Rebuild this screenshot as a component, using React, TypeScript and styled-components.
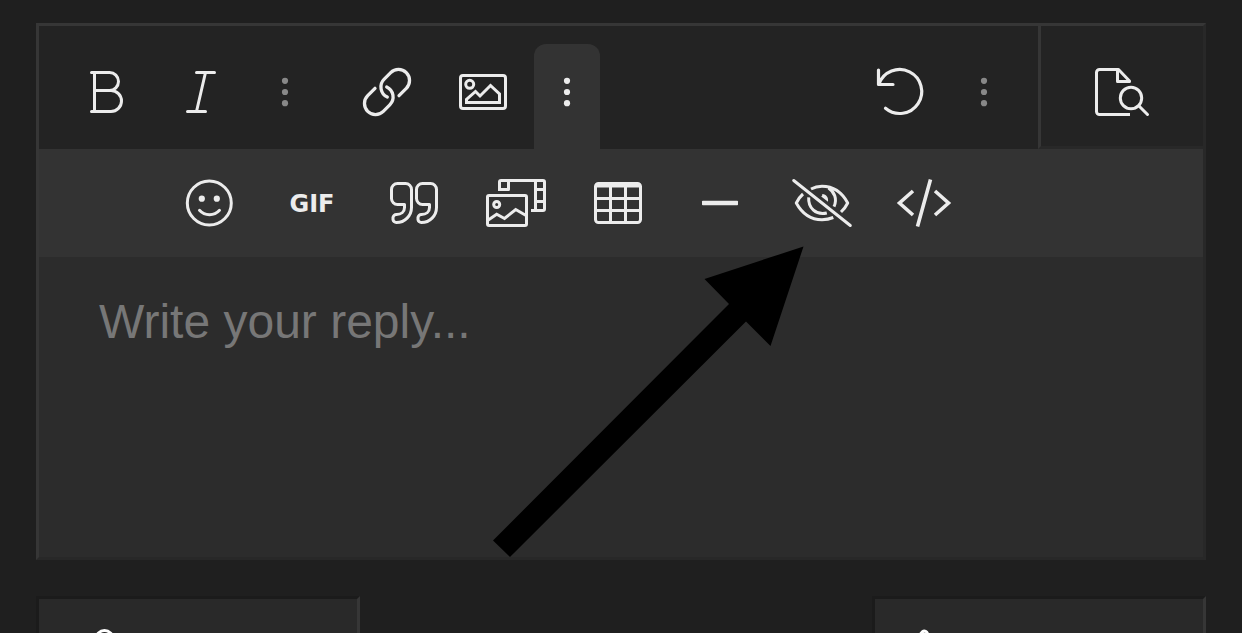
import React from "react";
import styled, { createGlobalStyle } from "styled-components";

const GlobalStyle = createGlobalStyle`
  * { box-sizing: border-box; }
  body {
    margin: 0;
    background: #1f1f1f;
    font-family: "Liberation Sans", Arial, sans-serif;
  }
`;

const Page = styled.main`
  height: 100vh;
  overflow: hidden;
  padding: 23px 36px 0;
`;

const Editor = styled.section`
  position: relative;
  border: 3px solid;
  border-color: #363636 #282828 #282828 #363636;
  background: #2c2c2c;
`;

const Toolbar = styled.div`
  display: flex;
  height: 123px;
  background: #232323;
`;

const Tools = styled.div`
  flex: 1;
  display: flex;
  justify-content: space-between;
  padding: 18px 21px 0 18px;
`;

const Side = styled.div`
  display: flex;
  gap: 21px;
`;

const Group = styled.div`
  display: flex;
`;

const ToolButton = styled.button`
  display: flex;
  align-items: center;
  justify-content: center;
  width: 96px;
  height: 96px;
  padding: 0;
  border: 0;
  background: transparent;
  color: #ececec;
  cursor: pointer;
`;

const MoreButton = styled(ToolButton)<{ $open?: boolean }>`
  width: 66px;
  height: 105px;
  margin-left: 3px;
  padding-bottom: 9px;
  border-radius: 12px 12px 0 0;
  background: ${(p) => (p.$open ? "#333333" : "transparent")};
  color: ${(p) => (p.$open ? "#ececec" : "#888888")};
`;

const PreviewButton = styled(ToolButton)`
  width: 165px;
  height: 123px;
  padding-top: 12px;
  border: solid;
  border-width: 0 0 3px 3px;
  border-color: #282828 #282828 #282828 #363636;
`;

const ExtraRow = styled.div`
  display: flex;
  align-items: center;
  gap: 6px;
  height: 108px;
  padding-left: 123px;
  background: #333333;
`;

const GifButton = styled(ToolButton)`
  padding-top: 2px;
  font: 700 24px "DejaVu Sans", "Liberation Sans", sans-serif;
`;

const Reply = styled.textarea`
  display: block;
  width: 100%;
  height: 300px;
  padding: 36px 60px;
  border: 0;
  outline: 0;
  resize: none;
  background: transparent;
  color: #ececec;
  font: 48px/58px "Liberation Sans", Arial, sans-serif;
  &::placeholder {
    color: #777777;
    opacity: 1;
  }
`;

const Pointer = styled.svg`
  position: absolute;
  left: 454px;
  top: 220px;
  pointer-events: none;
`;

const Footer = styled.footer`
  display: flex;
  justify-content: space-between;
  margin-top: 36px;
`;

const ActionButton = styled.button<{ $width: number }>`
  display: flex;
  align-items: flex-start;
  width: ${(p) => p.$width}px;
  height: 108px;
  padding: 28px 33px 0;
  border: 3px solid;
  border-color: #1b1b1b #363636 #363636 #1b1b1b;
  background: #292929;
  color: #ffffff;
`;

const Glyph = styled.svg`
  display: block;
  flex: none;
  width: 64px;
  height: 64px;
  fill: none;
  stroke: currentColor;
  stroke-width: 3;
  stroke-linecap: round;
  stroke-linejoin: round;
`;

function Icon({ children }: { children: React.ReactNode }) {
  return (
    <Glyph viewBox="-32 -32 64 64" aria-hidden="true">
      {children}
    </Glyph>
  );
}

const Dots = () => (
  <Icon>
    <g fill="currentColor" stroke="none">
      <circle cy="-11.2" r="3.1" />
      <circle r="3.1" />
      <circle cy="11.2" r="3.1" />
    </g>
  </Icon>
);

const QUOTE =
  "M-9.5 1.5H-16.5A6 6 0 0 1-22.5-4.5V-13.5A6 6 0 0 1-16.5-19.5H-8.5A6 6 0 0 1-2.5-13.5V4.5A15 15 0 0 1-17.5 19.5A3.3 3.3 0 0 1-21 16.5V14.5A3.3 3.3 0 0 1-17.5 11.5C-13 11.5-9.5 9-9.5 4.5Z";

export default function App() {
  return (
    <Page>
      <GlobalStyle />
      <Editor>
        <Toolbar>
          <Tools>
            <Side>
              <Group>
                <ToolButton aria-label="Bold">
                  <Icon>
                    <path d="M-13.5-19.5H4.5a9 9 0 0 1 0 18M-10.5-1.5H6a10.5 10.5 0 0 1 0 21H-13.5M-10.5-19.5V19.5" />
                  </Icon>
                </ToolButton>
                <ToolButton aria-label="Italic">
                  <Icon>
                    <path d="M-4.5-19.5H13.5M-13.5 19.5H4.5M4.5-19.5L-4.5 19.5" />
                  </Icon>
                </ToolButton>
                <MoreButton aria-label="More text options">
                  <Dots />
                </MoreButton>
              </Group>
              <Group>
                <ToolButton aria-label="Link">
                  <Icon>
                    <g strokeWidth="3.3">
                      <path d="M12 3.7L19.3-3.7A11 11 0 0 0 3.7-19.3L-2.8-12.8A11 11 0 0 0 .3 5" />
                      <path d="M-12-3.7L-19.3 3.7A11 11 0 0 0-3.7 19.3L2.8 12.8A11 11 0 0 0-.3-5" />
                    </g>
                  </Icon>
                </ToolButton>
                <ToolButton aria-label="Image">
                  <Icon>
                    <rect x="-22.5" y="-16.5" width="45" height="33" rx="2.5" />
                    <circle cx="-13.3" cy="-7.7" r="4" />
                    <path
                      strokeLinejoin="miter"
                      d="M-16.5 10.5V7.5L-7.5-.5L-3 4L7.5-6.5L16.5 2V10.5Z"
                    />
                  </Icon>
                </ToolButton>
                <MoreButton $open aria-label="More insert options" aria-expanded="true">
                  <Dots />
                </MoreButton>
              </Group>
            </Side>
            <Group>
              <ToolButton aria-label="Undo">
                <Icon>
                  <path
                    strokeWidth="3.2"
                    d="M-21.5-22V-7.5H-7M-21-8A22 22 0 1 1-14.5 16.3"
                  />
                </Icon>
              </ToolButton>
              <MoreButton aria-label="More options">
                <Dots />
              </MoreButton>
            </Group>
          </Tools>
          <PreviewButton aria-label="Preview">
            <Icon>
              <path
                strokeLinecap="butt"
                d="M8 22.5H-22.5a3 3 0 0 1-3-3V-19.5a3 3 0 0 1 3-3H-3.5L7.5-11V-10.5H-4.5V-22.5"
              />
              <circle cx="9" cy="6" r="10.7" />
              <path d="M17 14L25.5 22.5" />
            </Icon>
          </PreviewButton>
        </Toolbar>
        <ExtraRow>
          <ToolButton aria-label="Smilies">
            <Icon>
              <circle cx="-.7" r="22" />
              <path d="M-10.5 7.3A13.5 13.5 0 0 0 9.5 7.3" />
              <g fill="currentColor" stroke="none">
                <circle cx="-8.2" cy="-4.3" r="3.1" />
                <circle cx="6.8" cy="-4.3" r="3.1" />
              </g>
            </Icon>
          </ToolButton>
          <GifButton>GIF</GifButton>
          <ToolButton aria-label="Quote">
            <Icon>
              <path d={QUOTE} />
              <path d={QUOTE} transform="translate(25 0)" />
            </Icon>
          </ToolButton>
          <ToolButton aria-label="Media">
            <Icon>
              <rect x="-28.5" y="-7.5" width="39" height="30" rx="1.5" />
              <circle cx="-19.3" cy="1.5" r="3" />
              <path
                strokeLinecap="butt"
                strokeLinejoin="miter"
                d="M-28.5 17.5L-19.3 11.3L-11.5 15.5L-.3 6.5L10.5 12.7"
              />
              <path
                strokeLinecap="butt"
                d="M-16.5-13.5V-21a1.5 1.5 0 0 1 1.5-1.5H27a1.5 1.5 0 0 1 1.5 1.5V6a1.5 1.5 0 0 1-1.5 1.5H15M-18-13.5H-7.5V-22.5M19.5-22.5V7.5M19.5-13.5H28.5M19.5-1.5H28.5"
              />
            </Icon>
          </ToolButton>
          <ToolButton aria-label="Table">
            <Icon>
              <rect x="-22.5" y="-19.5" width="45" height="39" rx="3" />
              <path strokeLinecap="butt" d="M-22-17H22M-7.5-18V19.5M7.5-18V19.5M-22.5-4.5H22.5M-22.5 7.5H22.5" />
            </Icon>
          </ToolButton>
          <ToolButton aria-label="Horizontal line">
            <Icon>
              <rect x="-18" y="-2.3" width="36" height="4.6" rx=".8" fill="currentColor" stroke="none" />
            </Icon>
          </ToolButton>
          <ToolButton aria-label="Spoiler">
            <Icon>
              <path d="M-28.3-22.5L28.3 22.5" />
              <path
                strokeLinecap="butt"
                d="M-19-9Q-23-5.5-25.7 0C-20 10.5-11 16.7 0 16.7Q6 16.7 11.3 14.5M-11-14Q-6-16.7 0-16.7C11-16.7 20-10.5 25.7 0Q23.3 5 19 9M-13.3-5.7C-14 5-6 12.5 4.8 10M6.5-15C12.5-11 15.5-4 12 3.7"
              />
              <path fill="currentColor" stroke="none" d="M.3-9C4.5-8.5 6.7-5.5 6-1.2L-.8-6.5Q.6-7.5.3-9Z" />
            </Icon>
          </ToolButton>
          <ToolButton aria-label="Code">
            <Icon>
              <path
                strokeLinecap="butt"
                strokeLinejoin="miter"
                strokeWidth="3.6"
                d="M6.5-23.5L-6.5 23.5M-11-12L-24.5 0L-11 12M11-12L24.5 0L11 12"
              />
            </Icon>
          </ToolButton>
        </ExtraRow>
        <Reply aria-label="Reply" placeholder="Write your reply..." />
        <Pointer width="312" height="312" viewBox="0 0 312 312" aria-hidden="true">
          <path d="M310.5.5L211.5 33L236 58L0 294.5L17 311L253 75.5L277.5 100Z" />
        </Pointer>
      </Editor>
      <Footer>
        <ActionButton $width={324} aria-label="Attach files">
          <Icon>
            <path d="M-8 14V-20A8.5 8.5 0 0 1 9-20V10A4 4 0 0 1 1 10V-12" />
          </Icon>
        </ActionButton>
        <ActionButton $width={334} aria-label="Post reply">
          <Icon>
            <path d="M-24-20L-17.5-27.2A3.1 3.1 0 0 1-12.5-25V-8H18" />
          </Icon>
        </ActionButton>
      </Footer>
    </Page>
  );
}
